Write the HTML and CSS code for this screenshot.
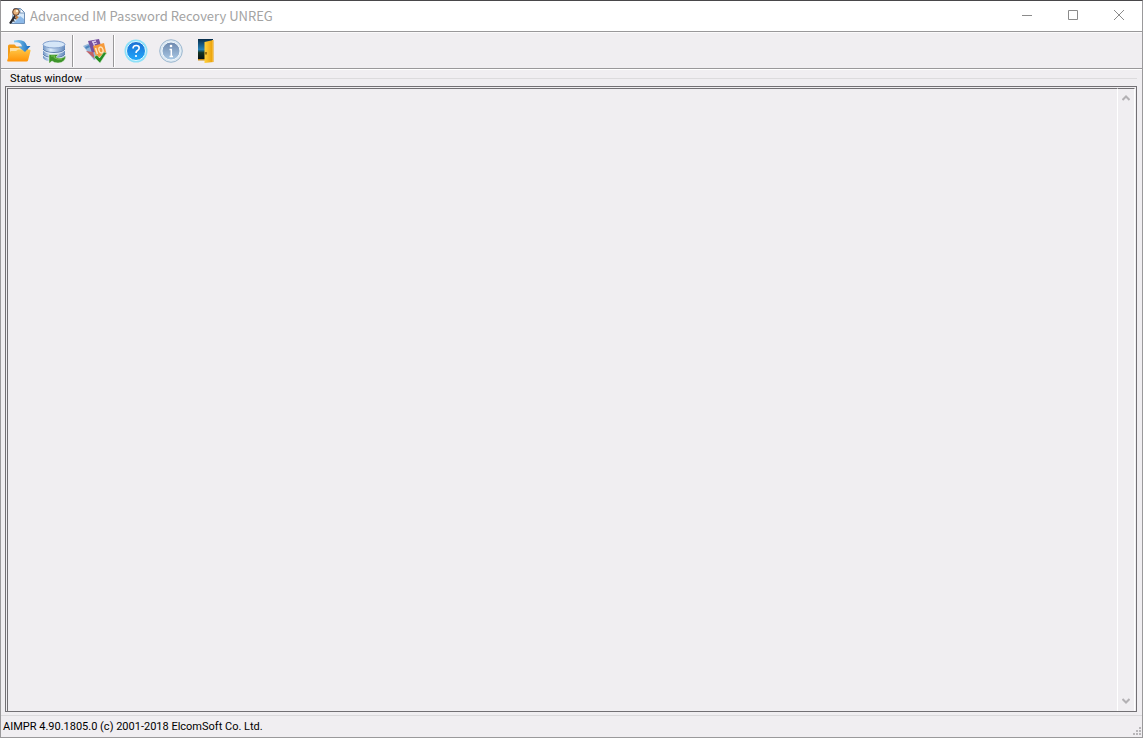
FILE: index.html
```html
<!DOCTYPE html>
<html lang="en">
<head>
<meta charset="utf-8">
<title>Advanced IM Password Recovery UNREG</title>
<link rel="stylesheet" href="styles.css">
</head>
<body>
<div class="window">
  <header class="titlebar">
    <svg class="app-icon" viewBox="0 0 16 16" aria-hidden="true">
      <path d="M5 .5h6.500l4 4v11H2.500z" fill="#d6e9fa" stroke="#6f8fb5"/>
      <path d="M11 1v4h4" fill="#fff" stroke="#7795b8"/>
      <path d="M5 15l6-7 4 3v4z" fill="#8cb9e8"/>
      <path d="M1 15.500l6-9" stroke="#24262d" stroke-width="2.200"/>
      <path d="M3.500 12l2 1.500M5 9.500l2 1.500" stroke="#31333a" stroke-width="1.200"/>
      <circle cx="7" cy="4" r="3.300" fill="#e7b27c" stroke="#5b3b2b"/>
      <circle cx="8" cy="3" r="1.300" fill="#fff0d0"/>
      <path d="M6 7l4 2-3 3z" fill="#bd7c43"/>
    </svg>
    <h1 class="title">Advanced IM Password Recovery UNREG</h1>
    <div class="controls">
      <button class="control" aria-label="Minimize"><svg class="glyph" viewBox="0 0 12 12"><path d="M1 5.500h10"/></svg></button>
      <button class="control" aria-label="Maximize"><svg class="glyph" viewBox="0 0 12 12"><path d="M1.500 .5h9v9h-9z"/></svg></button>
      <button class="control" aria-label="Close"><svg class="glyph" viewBox="0 0 12 12"><path d="M1 0l10 10M11 0L1 10"/></svg></button>
    </div>
  </header>

  <nav class="toolbar" aria-label="Main toolbar">
    <button class="tool" aria-label="Open">
      <svg class="tool-icon" viewBox="0 0 24 24">
        <defs>
          <linearGradient id="folder" x2="0" y2="1"><stop stop-color="#ffc545"/><stop offset="1" stop-color="#ff9206"/></linearGradient>
          <linearGradient id="arrow"><stop stop-color="#8fd5f5"/><stop offset="1" stop-color="#1267bd"/></linearGradient>
        </defs>
        <path d="M1 7q0-1.500 1.500-1.500h5l2 2H20q1 0 1 1V20H1z" fill="#f29b18"/>
        <path d="M3 9h17v5H3z" fill="#ffe0a0"/>
        <path d="M1 22.500q-1 0-.8-1L3 13q.4-1 1.400-1H9l2-1.500h11.500q1.500 0 1 1.500l-2.300 9q-.4 1.500-1.700 1.500z" fill="url(#folder)"/>
        <path d="M7 1.500Q18-1 20 7h3.500l-5.500 6-7-5.500h4Q14 2.500 7 3.500z" fill="url(#arrow)"/>
      </svg>
    </button>
    <button class="tool" aria-label="Recover from database">
      <svg class="tool-icon" viewBox="0 0 24 24">
        <defs>
          <linearGradient id="disk"><stop stop-color="#6f94c4"/><stop offset=".35" stop-color="#dcecfb"/><stop offset="1" stop-color="#6288bd"/></linearGradient>
        </defs>
        <path d="M1 5v14q2 3.500 11 3.500T23 19V5z" fill="url(#disk)"/>
        <path d="M1 10q2 3.500 11 3.500T23 10M1 15q2 3.500 11 3.500T23 15" fill="none" stroke="#5c7cab"/>
        <path d="M1 11q2 3.500 11 3.500T23 11M1 16q2 3.500 11 3.500T23 16" fill="none" stroke="#f3faff" stroke-width=".8"/>
        <ellipse cx="12" cy="5.500" rx="11" ry="3.500" fill="#d5e6f8" stroke="#82a0cd"/>
        <path d="M7 15.500h9.500L14 18q4 3 10-1-1 7-8 7-4 0-6-2L7 24.500z" fill="#3e942b" stroke="#eaf5e6" stroke-width=".5"/>
        <path d="M9 17h4l-1 1.500q3 2.500 8 1.500" fill="none" stroke="#79c250"/>
      </svg>
    </button>
    <span class="divider"></span>
    <button class="tool" aria-label="Check messengers">
      <svg class="tool-icon" viewBox="0 0 24 24">
        <path d="M0 7l7-3 8 15-4 2z" fill="#95b7da"/>
        <path d="M2 8l4-2 1 2-4 2z" fill="#4c85be"/>
        <path d="M5 2L16 0l3 10-10 4z" fill="#76509f"/>
        <path d="M9 3l4-1M10 3l2 5M11 5l3-1" stroke="#dac9eb" stroke-width="1.300"/>
        <path d="M3 12l7 1 2 7z" fill="#c46266"/>
        <path d="M10 7l11-3 2.500 11-10 4z" fill="#f69a3b"/>
        <path d="M12.500 9l2 6" stroke="#ffe6bb" stroke-width="1.500"/>
        <ellipse cx="18" cy="11" rx="2" ry="3" transform="rotate(-18 18 11)" fill="none" stroke="#ffe6bb" stroke-width="1.300"/>
        <path d="M11 18l3-2 2.500 3L21 13l2.500 1-6.500 10z" fill="#258d24" stroke="#d9edce" stroke-width=".5"/>
      </svg>
    </button>
    <span class="divider"></span>
    <button class="tool" aria-label="Help">
      <svg class="tool-icon" viewBox="0 0 24 24">
        <defs><linearGradient id="help" x2="0" y2="1"><stop stop-color="#1c6fd3"/><stop offset="1" stop-color="#20a8fb"/></linearGradient></defs>
        <circle cx="12" cy="12" r="11.500" fill="#8ce0f8"/>
        <circle cx="12" cy="12" r="9.500" fill="url(#help)" stroke="#e1faff"/>
        <path d="M9 9.500q0-3 3.200-3 3 0 3 2.500 0 1.500-1.700 2.500-1.500.8-1.500 2.500" fill="none" stroke="#fff" stroke-width="1.600"/>
        <circle cx="12" cy="17" r="1.100" fill="#fff"/>
      </svg>
    </button>
    <button class="tool" aria-label="About">
      <svg class="tool-icon" viewBox="0 0 24 24">
        <defs><linearGradient id="about" x2="0" y2="1"><stop stop-color="#6c87ad"/><stop offset="1" stop-color="#a9c9e5"/></linearGradient></defs>
        <circle cx="12" cy="12" r="11.300" fill="#dce8f2" stroke="#9cb7cf"/>
        <circle cx="12" cy="12" r="9" fill="url(#about)" stroke="#eef7fc"/>
        <circle cx="12" cy="7" r="1.300" fill="#fff"/>
        <path d="M10.500 10.500h1.800v7M10.500 17.500h3.500" fill="none" stroke="#fff" stroke-width="1.500"/>
      </svg>
    </button>
    <button class="tool" aria-label="Exit">
      <svg class="tool-icon" viewBox="0 0 24 24">
        <defs>
          <linearGradient id="sky" x2="0" y2="1"><stop stop-color="#062c4a"/><stop offset=".5" stop-color="#2581b7"/><stop offset=".65" stop-color="#14331f"/><stop offset="1" stop-color="#050d14"/></linearGradient>
          <linearGradient id="door"><stop stop-color="#ffd13c"/><stop offset="1" stop-color="#e79a05"/></linearGradient>
        </defs>
        <path d="M4 0h15v21H4z" fill="url(#sky)"/>
        <path d="M4 20h7v1.500H4z" fill="#c98c18"/>
        <path d="M10.500 3L19.500 1v22l-9 1z" fill="url(#door)"/>
        <path d="M18.500 1v22" stroke="#f5b930"/>
        <path d="M12 13v2.500" stroke="#6b4400" stroke-width="1.300"/>
      </svg>
    </button>
  </nav>

  <main class="content">
    <div class="caption"><label class="caption-text" for="status">Status window</label><span class="caption-line"></span></div>
    <div class="frame">
      <textarea class="log" id="status" readonly></textarea>
      <div class="scroll">
        <button class="scroll-button" aria-label="Scroll up"><svg class="chevron" viewBox="0 0 8 6"><path d="M.5 5L4 1.500 7.500 5"/></svg></button>
        <button class="scroll-button" aria-label="Scroll down"><svg class="chevron" viewBox="0 0 8 6"><path d="M.5 1L4 4.500 7.500 1"/></svg></button>
      </div>
    </div>
  </main>

  <footer class="statusbar">
    <span class="version">AIMPR 4.90.1805.0 (c) 2001-2018 ElcomSoft Co. Ltd.</span>
    <svg class="grip" viewBox="0 0 8 8" aria-hidden="true"><path d="M6 0h2v2H6zM3 3h2v2H3zM6 3h2v2H6zM0 6h2v2H0zM3 6h2v2H3zM6 6h2v2H6z"/></svg>
  </footer>
</div>
</body>
</html>
```

FILE: styles.css
```css
* { box-sizing: border-box; }

body {
  margin: 0;
  background: #f0eef1;
  color: #000;
  font-family: Roboto, "Liberation Sans", sans-serif;
  font-size: 11px;
}

button {
  padding: 0;
  border: 0;
  background: none;
}

.window {
  display: flex;
  flex-direction: column;
  height: 100vh;
  border: 1px solid #9a999b;
  border-top-color: #49474a;
}

.titlebar {
  display: flex;
  align-items: center;
  flex: none;
  height: 31px;
  padding-left: 8px;
  background: #fff;
  border-bottom: 1px solid #99989a;
}

.app-icon {
  width: 16px;
  height: 16px;
}

.title {
  flex: 1;
  margin: 0;
  padding-left: 5px;
  color: #a3a3a3;
  font: 400 13px/16px "Noto Sans CJK SC", "Noto Sans", sans-serif;
}

.controls { display: flex; }

.control {
  display: grid;
  place-items: center;
  width: 46px;
  height: 30px;
}

.glyph {
  width: 12px;
  height: 12px;
  fill: none;
  stroke: #8b8b8b;
}

.toolbar {
  display: flex;
  align-items: center;
  flex: none;
  height: 37px;
  padding-left: 5px;
  border-top: 1px solid #fbfafb;
  border-bottom: 1px solid #99989a;
}

.tool {
  display: grid;
  place-items: center;
  width: 25px;
  height: 32px;
  margin-right: 10px;
}

.tool-icon {
  width: 24px;
  height: 24px;
}

.divider {
  width: 2px;
  height: 32px;
  margin-right: 8px;
  margin-left: -4px;
  border-left: 1px solid #99989a;
  border-right: 1px solid #fff;
}

.content {
  display: flex;
  flex: 1;
  flex-direction: column;
  min-height: 0;
  padding: 0 5px 3px 4px;
  border-top: 1px solid #fff;
}

.caption {
  display: flex;
  align-items: center;
  flex: none;
  gap: 3px;
  height: 16px;
  padding-left: 5px;
}

.caption-line {
  flex: 1;
  height: 1px;
  background: #dcdbdd;
}

.frame {
  display: flex;
  flex: 1;
  min-height: 0;
  border: 1px solid #727074;
}

.log {
  flex: 1;
  min-width: 0;
  margin: 1px 0 0 1px;
  border: 0;
  border-top: 1px solid #727074;
  border-left: 1px solid #727074;
  background: #f0eef1;
  outline: 0;
  resize: none;
}

.scroll {
  display: flex;
  flex-direction: column;
  justify-content: space-between;
  width: 18px;
  margin: 1px 1px 0 0;
  padding-bottom: 1px;
  border: solid #fff;
  border-width: 0 1px;
  border-top: 1px solid #727074;
}

.scroll-button {
  display: grid;
  place-items: center;
  height: 18px;
}

.chevron {
  width: 8px;
  height: 6px;
  fill: none;
  stroke: #b3b1b4;
  stroke-width: 2;
}

.statusbar {
  display: flex;
  align-items: center;
  justify-content: space-between;
  flex: none;
  height: 22px;
  padding: 0 1px 0 2px;
  border-top: 1px solid #dad9db;
}

.grip {
  align-self: flex-end;
  width: 8px;
  height: 8px;
  margin-bottom: 2px;
  fill: #b8b6b9;
}
```
